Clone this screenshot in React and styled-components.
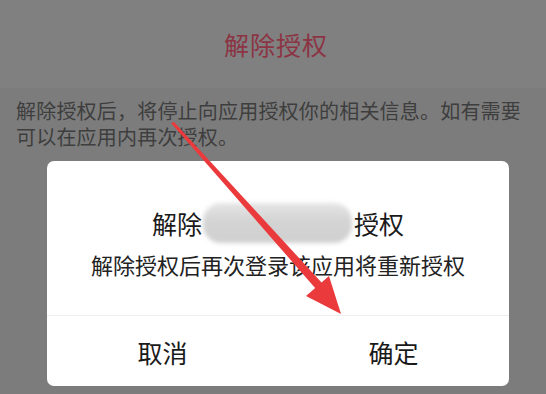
import React from 'react';
import styled, { createGlobalStyle } from 'styled-components';

const GlobalStyle = createGlobalStyle`
  html, body {
    margin: 0;
    padding: 0;
  }
  body {
    font-family: "Noto Sans CJK SC", "Noto Sans", sans-serif;
  }
`;

const Page = styled.div`
  position: relative;
  width: 546px;
  height: 394px;
  overflow: hidden;
  background: #7c7c7c;
  display: flex;
  flex-direction: column;
`;

const Header = styled.div`
  height: 88px;
  display: flex;
  align-items: center;
  justify-content: center;
  background: #808080;
  padding-left: 6px;
`;

const HeaderTitle = styled.h1`
  margin: 0;
  font-size: 25px;
  font-weight: 400;
  color: #8c3444;
  letter-spacing: 1px;
`;

const Body = styled.div`
  padding: 10px 16px 0 16px;
`;

const Paragraph = styled.p`
  margin: 0;
  font-size: 20px;
  line-height: 26px;
  color: #3e3e3e;
  letter-spacing: 0.2px;
`;

const Dialog = styled.div`
  position: absolute;
  left: 47px;
  top: 161px;
  width: 462px;
  height: 225px;
  background: #ffffff;
  border-radius: 7px;
  display: flex;
  flex-direction: column;
  overflow: hidden;
`;

const DialogContent = styled.div`
  height: 154px;
  display: flex;
  flex-direction: column;
  align-items: center;
  padding-top: 40px;
  box-sizing: border-box;
`;

const DialogTitle = styled.div`
  display: flex;
  align-items: center;
  font-size: 25px;
  line-height: 44px;
  color: #1a1a1a;
`;

const Masked = styled.span`
  display: inline-block;
  width: 149px;
  height: 40px;
  margin: 0 2px 0 1px;
  border-radius: 18px;
  background: linear-gradient(180deg, #e6e6e6 0%, #d4d4d4 45%, #d0d0d0 100%);
  filter: blur(2px);
`;

const DialogText = styled.div`
  margin-top: 4px;
  font-size: 22px;
  line-height: 30px;
  color: #222222;
`;

const Actions = styled.div`
  flex: 1;
  display: flex;
  border-top: 1px solid #eeeeee;
`;

const Action = styled.button`
  flex: 1;
  border: none;
  background: transparent;
  font-family: inherit;
  font-size: 25px;
  color: #1a1a1a;
  padding: 2px 0 0 0;
  cursor: pointer;
`;

const Arrow = styled.svg`
  position: absolute;
  left: 0;
  top: 0;
  pointer-events: none;
`;

export default function App() {
  return (
    <>
      <GlobalStyle />
      <Page>
        <Header>
          <HeaderTitle>解除授权</HeaderTitle>
        </Header>
        <Body>
          <Paragraph>
            解除授权后，将停止向应用授权你的相关信息。如有需要可以在应用内再次授权。
          </Paragraph>
        </Body>
        <Dialog>
          <DialogContent>
            <DialogTitle>
              解除<Masked />授权
            </DialogTitle>
            <DialogText>解除授权后再次登录该应用将重新授权</DialogText>
          </DialogContent>
          <Actions>
            <Action type="button">取消</Action>
            <Action type="button">确定</Action>
          </Actions>
        </Dialog>
        <Arrow width="546" height="394" viewBox="0 0 546 394">
          <polygon
            points="171,123 174,122 322,283 316,289"
            fill="#ea3a3c"
          />
          <polygon points="341,314 306,296 329,276" fill="#ea3a3c" />
        </Arrow>
      </Page>
    </>
  );
}
